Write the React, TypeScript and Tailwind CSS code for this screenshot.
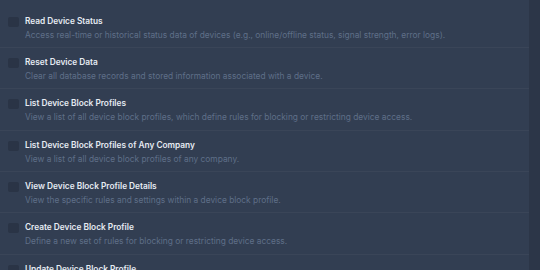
const permissions = [
  {
    title: "Read Device Status",
    desc: "Access real-time or historical status data of devices (e.g., online/offline status, signal strength, error logs).",
  },
  {
    title: "Reset Device Data",
    desc: "Clear all database records and stored information associated with a device.",
  },
  {
    title: "List Device Block Profiles",
    desc: "View a list of all device block profiles, which define rules for blocking or restricting device access.",
  },
  {
    title: "List Device Block Profiles of Any Company",
    desc: "View a list of all device block profiles of any company.",
  },
  {
    title: "View Device Block Profile Details",
    desc: "View the specific rules and settings within a device block profile.",
  },
  {
    title: "Create Device Block Profile",
    desc: "Define a new set of rules for blocking or restricting device access.",
  },
  {
    title: "Update Device Block Profile",
    desc: "Modify the rules and settings of an existing device block profile.",
  },
];

function PermissionRow({ title, desc }: { title: string; desc: string }) {
  return (
    <label className="flex h-[41.33px] shrink-0 items-start gap-[6px] border-b border-[#3a4558] pl-[8px] pt-[8px]">
      <input type="checkbox" className="sr-only" />
      <span className="mt-[2px] block h-[10px] w-[11px] shrink-0 rounded-[2px] bg-[#2a3446]" />
      <div className="flex flex-col">
        <div className="text-[8.3px] leading-[12px] font-semibold text-[#e6ebf2]">{title}</div>
        <div className="mt-[2px] text-[8.4px] leading-[12px] text-[#5f6f88]">{desc}</div>
      </div>
    </label>
  );
}

export default function App() {
  return (
    <div
      className="flex h-[270px] w-[540px] overflow-hidden bg-[#323e52]"
      style={{ fontFamily: "Inter, 'Noto Sans', sans-serif" }}
    >
      <div className="flex flex-1 flex-col pt-[6.67px]">
        {permissions.map((p) => (
          <PermissionRow key={p.title} {...p} />
        ))}
      </div>
      <div className="w-[11px] shrink-0 bg-[#2c3648]" />
    </div>
  );
}
